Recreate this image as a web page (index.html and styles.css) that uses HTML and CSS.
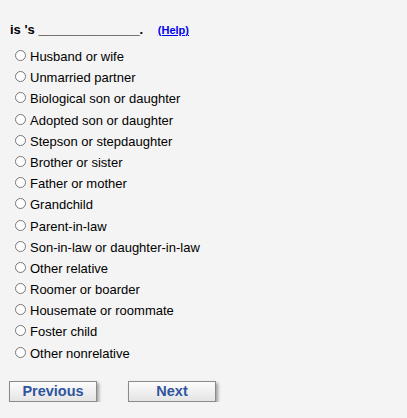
FILE: index.html
```html
<!DOCTYPE html>
<html lang="en">
<head>
  <meta charset="UTF-8">
  <title>Relationship</title>
  <link rel="stylesheet" href="styles.css">
</head>
<body>
  <form class="question">
    <p class="prompt">is 's ______________. <a href="#" class="help">(Help)</a></p>
    <ul class="choices">
      <li><label><input type="radio" name="rel"> Husband or wife</label></li>
      <li><label><input type="radio" name="rel"> Unmarried partner</label></li>
      <li><label><input type="radio" name="rel"> Biological son or daughter</label></li>
      <li><label><input type="radio" name="rel"> Adopted son or daughter</label></li>
      <li><label><input type="radio" name="rel"> Stepson or stepdaughter</label></li>
      <li><label><input type="radio" name="rel"> Brother or sister</label></li>
      <li><label><input type="radio" name="rel"> Father or mother</label></li>
      <li><label><input type="radio" name="rel"> Grandchild</label></li>
      <li><label><input type="radio" name="rel"> Parent-in-law</label></li>
      <li><label><input type="radio" name="rel"> Son-in-law or daughter-in-law</label></li>
      <li><label><input type="radio" name="rel"> Other relative</label></li>
      <li><label><input type="radio" name="rel"> Roomer or boarder</label></li>
      <li><label><input type="radio" name="rel"> Housemate or roommate</label></li>
      <li><label><input type="radio" name="rel"> Foster child</label></li>
      <li><label><input type="radio" name="rel"> Other nonrelative</label></li>
    </ul>
    <div class="nav">
      <button type="button" class="navbtn">Previous</button>
      <button type="button" class="navbtn">Next</button>
    </div>
  </form>
</body>
</html>
```

FILE: styles.css
```css
body {
  margin: 0;
  background-color: #f4f4f4;
  font-family: "Liberation Sans", Arial, sans-serif;
  color: #000;
}

.question {
  padding: 22px 0 0 9px;
}

.prompt {
  margin: 0 0 8px 1px;
  font-size: 13px;
  font-weight: bold;
  line-height: 15px;
}

.help {
  margin-left: 11px;
  font-size: 11px;
  color: #0000ee;
}

.choices {
  list-style: none;
  margin: 0;
  padding: 0 0 0 5px;
}

.choices li {
  height: 21.2px;
  font-size: 13px;
  line-height: 21px;
}

.choices label {
  display: flex;
  align-items: center;
  gap: 2px;
}

.choices input {
  width: 11px;
  height: 11px;
  margin: 0 2px 2px 1px;
  accent-color: #555;
}

.nav {
  display: flex;
  gap: 31px;
  margin-top: 17px;
}

.navbtn {
  width: 88px;
  height: 21px;
  padding: 0;
  border: 1px solid #8a8a8a;
  border-radius: 0;
  background: linear-gradient(#fcfcfc, #e4e4e4);
  box-shadow: 2px 2px 3px rgba(0, 0, 0, 0.35);
  color: #2f559f;
  font-family: "Liberation Sans", Arial, sans-serif;
  font-size: 14.5px;
  font-weight: bold;
  cursor: pointer;
}
```
